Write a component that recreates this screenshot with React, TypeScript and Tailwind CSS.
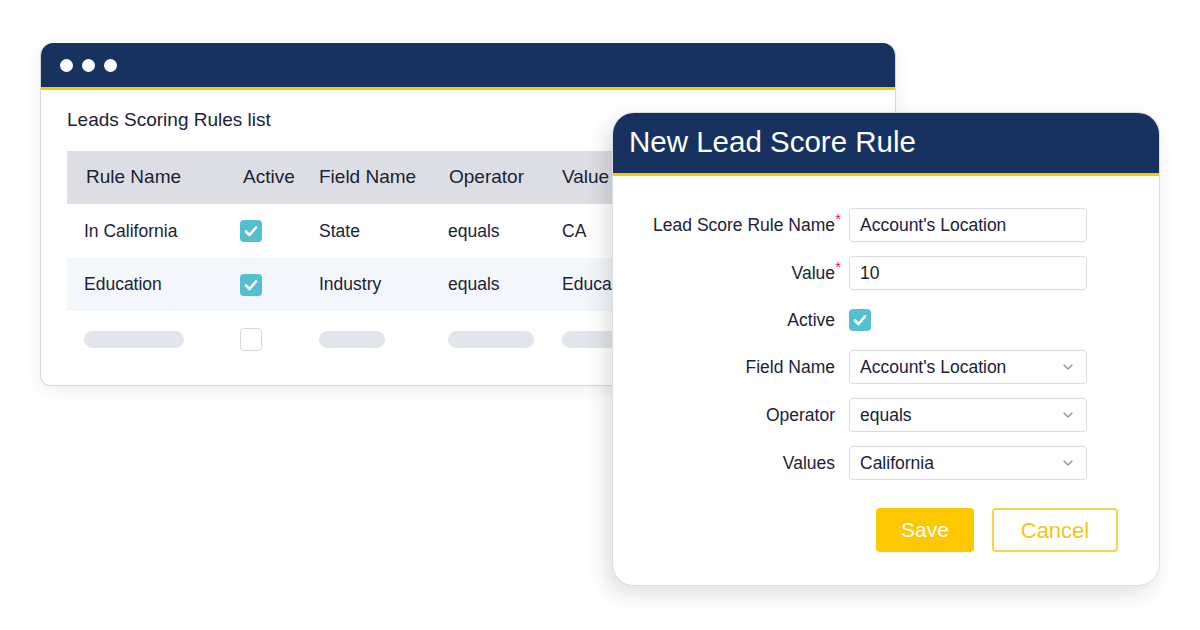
import React from "react";

const Check = ({ size = 22 }: { size?: number }) => (
  <div
    className="flex items-center justify-center rounded-[4px] bg-[#55bfd2]"
    style={{ width: size, height: size }}
  >
    <svg width={size - 6} height={size - 6} viewBox="0 0 16 16" fill="none">
      <path d="M3 8.5 L6.5 12 L13 4.5" stroke="white" strokeWidth="2.6" strokeLinecap="round" strokeLinejoin="round" />
    </svg>
  </div>
);

const Chevron = () => (
  <svg width="12" height="8" viewBox="0 0 12 8" fill="none">
    <path d="M2 2 L6 6 L10 2" stroke="#8a8f9c" strokeWidth="1.3" strokeLinecap="round" strokeLinejoin="round" />
  </svg>
);

const cols = "grid grid-cols-[156px_79px_129px_114px_1fr] items-center pl-[17px]";

export default function App() {
  return (
    <div
      className="relative w-[1200px] h-[630px] bg-white overflow-hidden text-[#1c2236]"
      style={{ fontFamily: '"Liberation Sans", Arial, sans-serif' }}
    >
      {/* Back window */}
      <div className="ml-[40px] mt-[43px] w-[856px] h-[343px] bg-white rounded-t-[13px] rounded-b-[10px] border border-[#d4d6da] border-t-0 shadow-[0_4px_18px_rgba(0,0,0,0.07)] overflow-hidden">
        <div className="h-[44px] bg-[#17325f] flex items-center gap-[9px] pl-[19px]">
          <span className="w-[13px] h-[13px] rounded-full bg-white" />
          <span className="w-[13px] h-[13px] rounded-full bg-white" />
          <span className="w-[13px] h-[13px] rounded-full bg-white" />
        </div>
        <div className="h-[3px] bg-[#fdc800]" />
        <div className="pl-[26px] pt-[19px]">
          <div className="text-[19px] leading-[22px]">Leads Scoring Rules list</div>
          <div className="mt-[20px] w-[560px]">
            <div className={`${cols} h-[53px] bg-[#dcdee3] text-[19px]`}>
              <span className="pl-[2px]">Rule Name</span>
              <span className="pl-[3px]">Active</span>
              <span>Field Name</span>
              <span className="pl-[1px]">Operator</span>
              <span>Value</span>
            </div>
            <div className={`${cols} h-[54px] text-[17.5px]`}>
              <span>In California</span>
              <Check />
              <span>State</span>
              <span>equals</span>
              <span>CA</span>
            </div>
            <div className={`${cols} h-[53px] text-[17.5px] bg-[#f3f7fb]`}>
              <span>Education</span>
              <Check />
              <span>Industry</span>
              <span>equals</span>
              <span>Educa</span>
            </div>
            <div className={`${cols} h-[56px]`}>
              <span className="block w-[100px] h-[17px] rounded-full bg-[#e2e5eb]" />
              <span className="block w-[22px] h-[23px] rounded-[4px] border border-[#d6d8dd] bg-white" />
              <span className="block w-[66px] h-[17px] rounded-full bg-[#e2e5eb]" />
              <span className="block w-[86px] h-[17px] rounded-full bg-[#e2e5eb]" />
              <span className="block w-[60px] h-[17px] rounded-full bg-[#e2e5eb]" />
            </div>
          </div>
        </div>
      </div>

      {/* Modal */}
      <div className="absolute left-[612px] top-[112px] w-[548px] h-[474px] bg-white rounded-[22px] overflow-hidden border border-[#dcdde0] shadow-[-6px_8px_22px_rgba(0,0,0,0.13)]">
        <div className="h-[60px] bg-[#17325f] flex items-center pl-[16px] pb-[3px]">
          <span className="text-white text-[29.5px] leading-none">New Lead Score Rule</span>
        </div>
        <div className="h-[3px] bg-[#fdc800]" />
        <div className="pt-[32px] flex flex-col gap-[14px] text-[17.5px]">
          {[
            { label: "Lead Score Rule Name", req: true, value: "Account's Location", kind: "input" },
            { label: "Value", req: true, value: "10", kind: "input" },
            { label: "Active", req: false, value: "", kind: "check" },
            { label: "Field Name", req: false, value: "Account's Location", kind: "select" },
            { label: "Operator", req: false, value: "equals", kind: "select" },
            { label: "Values", req: false, value: "California", kind: "select" },
          ].map((r) => (
            <div key={r.label} className={`flex items-center ${r.kind === "check" ? "h-[32px]" : "h-[34px]"}`}>
              <div className="w-[222px] text-right relative">
                {r.label}
                {r.req && <span className="absolute -right-[6px] top-[-3px] text-[#d0243b] text-[14px]">*</span>}
              </div>
              <div className="ml-[14px]">
                {r.kind === "check" ? (
                  <Check />
                ) : (
                  <div className="w-[238px] h-[34px] rounded-[4px] border border-[#d9dbe0] flex items-center justify-between pl-[10px] pr-[12px] bg-white">
                    <span>{r.value}</span>
                    {r.kind === "select" && <Chevron />}
                  </div>
                )}
              </div>
            </div>
          ))}
        </div>
        <div className="flex justify-end gap-[18px] pr-[41px] mt-[28px]">
          <button className="w-[98px] h-[44px] rounded-[4px] bg-[#fdc800] text-white text-[21px]">Save</button>
          <button className="w-[126px] h-[44px] rounded-[4px] border-2 border-[#f7d24a] text-[#f2c518] text-[22px] bg-white">Cancel</button>
        </div>
      </div>
    </div>
  );
}
